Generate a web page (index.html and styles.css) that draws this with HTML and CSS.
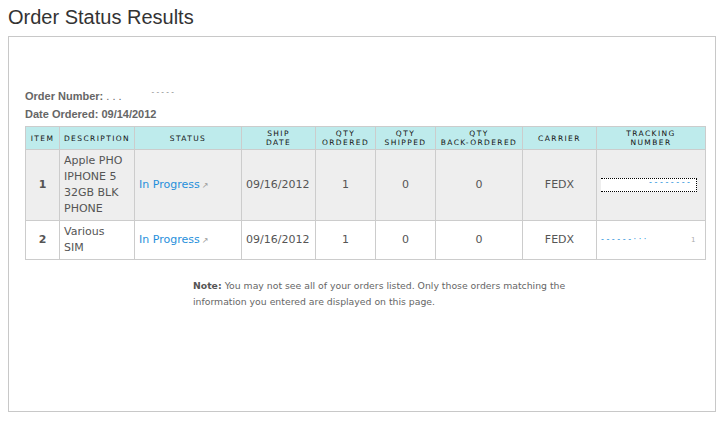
FILE: index.html
```html
<!DOCTYPE html>
<html>
<head>
<meta charset="utf-8">
<link rel="stylesheet" href="styles.css">
</head>
<body>
<h1 class="title">Order Status Results</h1>
<div class="box">
  <div class="meta">
    <div class="meta-line">Order Number: <span class="redact">. . .</span><span class="redact2">- - - - -</span></div>
    <div class="meta-line">Date Ordered: 09/14/2012</div>
  </div>
  <table class="orders">
    <colgroup>
      <col style="width:34px"><col style="width:75px"><col style="width:107px"><col style="width:74px"><col style="width:60px"><col style="width:60px"><col style="width:87px"><col style="width:74px"><col style="width:109px">
    </colgroup>
    <thead>
      <tr>
        <th>Item</th><th>Description</th><th>Status</th><th>Ship<br>Date</th><th>Qty<br>Ordered</th><th>Qty<br>Shipped</th><th>Qty<br>Back-Ordered</th><th>Carrier</th><th>Tracking<br>Number</th>
      </tr>
    </thead>
    <tbody>
      <tr class="odd">
        <td class="num">1</td>
        <td class="desc">Apple PHO<br>IPHONE 5<br>32GB BLK<br>PHONE</td>
        <td class="status"><a class="link">In Progress</a><span class="ext">↗</span></td>
        <td class="date">09/16/2012</td>
        <td class="c">1</td><td class="c">0</td><td class="c">0</td><td class="c">FEDX</td>
        <td class="track"><span class="track-box"><span class="dashes">- - - - - - - -</span></span></td>
      </tr>
      <tr>
        <td class="num">2</td>
        <td class="desc">Various<br>SIM</td>
        <td class="status"><a class="link">In Progress</a><span class="ext">↗</span></td>
        <td class="date">09/16/2012</td>
        <td class="c">1</td><td class="c">0</td><td class="c">0</td><td class="c">FEDX</td>
        <td class="track"><span class="track-plain"><span class="dashes">- - - - - - · · ·</span></span><span class="tick">1</span></td>
      </tr>
    </tbody>
  </table>
  <p class="note"><b class="note-label">Note:</b><span class="note-text">You may not see all of your orders listed. Only those orders matching the information you entered are displayed on this page.</span></p>
</div>
</body>
</html>
```

FILE: styles.css
```css
html, body {
  margin: 0;
  padding: 0;
  background: #fff;
}
body {
  font-family: "DejaVu Sans", Verdana, sans-serif;
  color: #555;
}
.title {
  margin: 0;
  padding: 6px 0 0 8px;
  height: 30px;
  font-family: "Liberation Sans", Arial, sans-serif;
  font-weight: normal;
  font-size: 20px;
  line-height: 22px;
  color: #333;
}
.box {
  margin-left: 8px;
  width: 708px;
  height: 376px;
  box-sizing: border-box;
  border: 1px solid #c8c8c8;
  padding: 51px 0 0 16px;
}
.meta-line {
  font-family: "Liberation Sans", Arial, sans-serif;
  font-size: 11px;
  font-weight: bold;
  line-height: 16px;
  color: #666;
  white-space: pre;
}
.redact {
  font-weight: normal;
  color: #666;
}
.redact2 {
  font-weight: normal;
  font-size: 8px;
  position: relative;
  top: -6px;
  margin-left: 30px;
  color: #777;
}
.orders {
  margin-top: 4px;
  width: 680px;
  table-layout: fixed;
  border-collapse: collapse;
}
.orders th, .orders td {
  border: 1px solid #cccccc;
}
.orders th {
  background: #beebec;
  height: 22px;
  padding: 0;
  font-size: 7.5px;
  line-height: 9px;
  letter-spacing: 1.4px;
  text-transform: uppercase;
  font-weight: normal;
  color: #111;
  text-align: center;
  vertical-align: middle;
}
.orders td {
  font-size: 11px;
  line-height: 16px;
  padding: 3px 4px;
  color: #555;
  vertical-align: middle;
}
.orders tr.odd td {
  background: #eeeeee;
}
.orders td.num {
  text-align: center;
  font-weight: bold;
  color: #555;
}
.orders td.c {
  text-align: center;
}
.link {
  color: #1f8fdb;
}
.ext {
  font-size: 8px;
  color: #999;
  margin-left: 2px;
}
.track-box {
  display: inline-block;
  box-sizing: border-box;
  width: 96px;
  height: 14px;
  background: #fff;
  border-top: 1px dotted #000;
  border-bottom: 1px dotted #000;
  border-right: 1px dotted #000;
  font-size: 8px;
  line-height: 8px;
  vertical-align: middle;
  text-align: right;
  padding-right: 6px;
  color: #1f8fdb;
}
.track-plain {
  display: inline-block;
  width: 86px;
  font-size: 8px;
  line-height: 8px;
  vertical-align: middle;
}
.dashes {
  color: #1f8fdb;
}
.tick {
  font-size: 7px;
  color: #aaa;
  margin-left: 4px;
  vertical-align: middle;
}
.note {
  margin: 18px 0 0 168px;
  width: 380px;
  font-size: 9.3px;
  line-height: 16px;
  color: #666;
}
.note-label {
  color: #555;
  margin-right: 3px;
}
```
